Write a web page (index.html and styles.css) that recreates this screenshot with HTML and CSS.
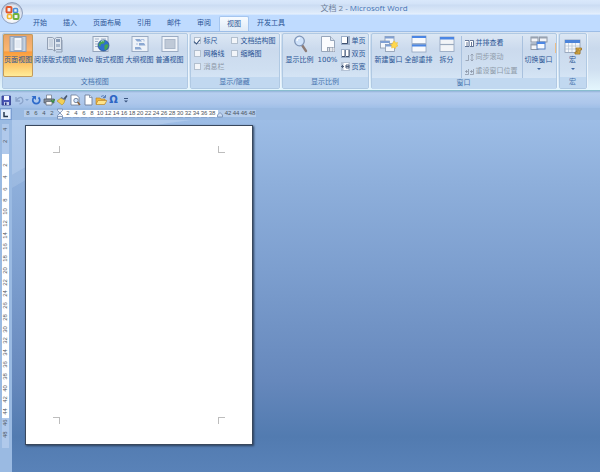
FILE: index.html
```html
<!DOCTYPE html>
<html lang="zh-CN">
<head>
<meta charset="utf-8">
<title>文档 2 - Microsoft Word</title>
<link rel="stylesheet" href="styles.css">
</head>
<body>
<header class="titlebar">
  <h1><span class="doc-name">文档 2</span> - Microsoft Word</h1>
  <button class="orb" aria-label="Office">
    <svg viewBox="0 0 24 24">
      <defs><radialGradient id="og" cx=".5" cy=".75" r=".8"><stop offset="0" stop-color="#fff"/><stop offset=".6" stop-color="#dde3ee"/><stop offset="1" stop-color="#a3aec4"/></radialGradient></defs>
      <circle cx="12" cy="12" r="10.5" fill="url(#og)" stroke="#7f8fae" stroke-width=".8"/>
      <path d="M3.5 10a8.8 8.8 0 0 1 17 0z" fill="#fff" opacity=".45"/>
      <g fill="none" stroke-width="2">
        <rect x="6.500" y="6" width="5" height="5.500" rx="1" stroke="#e0562b"/>
        <rect x="13.500" y="7.500" width="4" height="4" rx="1" stroke="#4a8fdb" stroke-width="1.600"/>
        <rect x="7.500" y="13.500" width="4" height="4" rx="1" stroke="#f3b52a" stroke-width="1.600"/>
        <rect x="13.500" y="13" width="5" height="5" rx="1" stroke="#6fb13c"/>
      </g>
    </svg>
  </button>
</header>

<nav class="tabs">
  <button>开始</button><button>插入</button><button>页面布局</button><button>引用</button><button>邮件</button><button>审阅</button><button class="active">视图</button><button>开发工具</button>
</nav>

<div class="ribbon">
  <section class="group">
    <div class="tools views">
      <button class="big active"><svg viewBox="0 0 18 18"><rect x="1" y="1.500" width="16" height="15" fill="#c6d3e3" stroke="#8d9cb4"/><path d="M3 3h12v12H3z" fill="#b9c8da"/><rect x="5" y="2.500" width="8" height="13" fill="#f5f8fc" stroke="#9aa9bf"/><path d="M6.500 5h5v8h-5z" fill="#e3eaf3"/></svg><span>页面视图</span></button>
      <button class="big"><svg viewBox="0 0 18 18"><path d="M1.500 2.500h5l2 1.500 2-1.500h5v12h-5l-2 1.500-2-1.500h-5z" fill="#dde5ef" stroke="#93a1b5"/><path d="M8.500 4v12" stroke="#8796ac"/><path d="M3 5h4M3 7h4M3 9h4M3 11h4" stroke="#b2bfd0"/><path d="M10 4h4v3h-4z" fill="#879bb8"/><path d="M10 9h4v3h-4z" fill="#a9b8cc"/><path d="M16 5v12h-6" fill="none" stroke="#8f9db1"/></svg><span>阅读版式视图</span></button>
      <button class="big"><svg viewBox="0 0 18 18"><rect x="1" y="1.500" width="15" height="15" fill="#edf2f8" stroke="#94a4ba"/><path d="M3 4h4M3 6.500h3M3 9h3M3 11.500h3M9 4h5" stroke="#a2b3ca"/><circle cx="11.500" cy="10.500" r="5.500" fill="#2f6fcd" stroke="#275085" stroke-width=".7"/><path d="M8 7q2.500-3 5-1l-1 2.500-3 .5-1 3-1.500-2zM12.500 10l3-1 1 2-2 3.500-2 .5z" fill="#47a551"/><path d="M9 6.500q2-1.500 3-.5" fill="none" stroke="#c5e5ff" stroke-width=".8"/></svg><span>Web 版式视图</span></button>
      <button class="big"><svg viewBox="0 0 18 18"><rect x="1" y="1.500" width="16" height="15" fill="#edf2f9" stroke="#9aabc3"/><path d="M4 4h5l2 2.500H6zM8 8h5l1.500 2.500H8zM4 12h5l2 2.500H4z" fill="#8ba8d2"/><path d="M10 4.500h3v2M5 9h2" stroke="#aabfdf" fill="none"/></svg><span>大纲视图</span></button>
      <button class="big"><svg viewBox="0 0 18 18"><rect x="1" y="1.500" width="16" height="15" fill="#f0f4fa" stroke="#9aabc3"/><rect x="4" y="4.500" width="10" height="9" fill="#bfc9d7" stroke="#aab7c9"/></svg><span>普通视图</span></button>
    </div>
    <h2>文档视图</h2>
  </section>

  <section class="group">
    <div class="tools checks">
      <label><input type="checkbox" checked>标尺</label>
      <label><input type="checkbox">文档结构图</label>
      <label><input type="checkbox">网格线</label>
      <label><input type="checkbox">缩略图</label>
      <label class="off"><input type="checkbox" disabled>消息栏</label>
    </div>
    <h2>显示/隐藏</h2>
  </section>

  <section class="group">
    <div class="tools zoom">
      <button class="big"><svg viewBox="0 0 18 18"><path d="M11 10l4 6" stroke="#8d7c77" stroke-width="2.400" stroke-linecap="round"/><circle cx="8.500" cy="6" r="4.800" fill="#cfe2fa" stroke="#8096b8" stroke-width="1.300"/><path d="M6 6q0-3 3-3" fill="none" stroke="#fff" stroke-width="1.200"/></svg><span>显示比例</span></button>
      <button class="big"><svg viewBox="0 0 18 18"><path d="M2.500 1.500h9l4 4v11h-13z" fill="#fbfcfe" stroke="#97a6bb"/><path d="M11.500 1.500v4h4" fill="#d5dfed" stroke="#97a6bb"/><path d="M8 12h8v5H8z" fill="#9aa5b5"/><path d="M9.500 13v3M11.500 13h1v3h-1zM14 13h1v3h-1z" fill="none" stroke="#fff" stroke-width=".7"/></svg><span>100%</span></button>
      <div class="list">
        <button><svg viewBox="0 0 9 9"><path d="M0 0h9v9H0z" fill="#9cafc9"/><path d="M1 1h5v6H1z" fill="#fff"/><path d="M6.500 1v6.500H1" fill="none" stroke="#40516f"/></svg>单页</button>
        <button><svg viewBox="0 0 9 9"><path d="M0 0h9v9H0z" fill="#9cafc9"/><path d="M1 1h3v6H1zM5 1h3v6H5z" fill="#fff"/><path d="M4 1v6.500H1M8 1v6.500H5" fill="none" stroke="#40516f"/></svg>双页</button>
        <button><svg viewBox="0 0 9 9"><path d="M0 0h9v9H0z" fill="#b4c2d5"/><path d="M2.500 1h5v7h-5z" fill="#fff"/><path d="M0 4.500h3M1.500 3v3M5 3h3v3H5zM5 4.500h3" fill="none" stroke="#50617e"/></svg>页宽</button>
      </div>
    </div>
    <h2>显示比例</h2>
  </section>

  <section class="group accent">
    <div class="tools window">
      <button class="big"><svg viewBox="0 0 18 18"><g fill="#f4f7fb" stroke="#8b9ab0" stroke-width=".8"><rect x="5" y="1.500" width="9" height="7"/><rect x=".5" y="6" width="9" height="7"/><rect x="5.500" y="9.500" width="9" height="7"/></g><path d="M5 1.500h9v2H5zM.5 6h9v2h-9zM5.500 9.500h9v2h-9z" fill="#7f9fd3"/><path d="M14.500 6l1 2 2-.5-.5 2 1 1.500-2 .5-.5 2-2-1-2 .5.500-2-1.500-1.500 2-.5.500-2z" fill="#ffd84e" stroke="#edb92c" stroke-width=".5"/></svg><span>新建窗口</span></button>
      <button class="big"><svg viewBox="0 0 18 18"><g fill="#f7f9fd" stroke="#8fa2bd" stroke-width=".8"><rect x="2" y="1" width="14" height="7.500"/><rect x="2" y="9.500" width="14" height="7.500"/></g><path d="M2 1h14v2H2zM2 9.500h14v2H2z" fill="#4b86e4"/></svg><span>全部重排</span></button>
      <button class="big split"><svg viewBox="0 0 18 18"><rect x="2" y="2" width="14" height="14.500" fill="#f2f4f7" stroke="#8fa2bd" stroke-width=".8"/><path d="M2 2h14v2.500H2z" fill="#4b86e4"/><path d="M2 9.500h14" stroke="#9aa9bd" stroke-width="1.200"/></svg><span>拆分</span></button>
      <div class="list roomy">
        <button><svg viewBox="0 0 9 9"><path d="M0 1h4v6H0zM5 1h3v6H5z" fill="#fff"/><path d="M0 1.500h4V7.500H0M5 1.500h3.500v6H5M2 3v4M6.500 3v4" fill="none" stroke="#42577d" stroke-width=".8"/></svg>并排查看</button>
        <button class="off" disabled><svg viewBox="0 0 9 9"><path d="M.5 7.500h3V2M7 1v7M5.500 2.500L7 1l1.500 1.500M5.500 6.500L7 8l1.500-1.500" fill="none" stroke="#8d98a8" stroke-width=".8"/></svg>同步滚动</button>
        <button class="off" disabled><svg viewBox="0 0 9 9"><path d="M0 7.500h3.500V2M5 7.500h3.500V2M0 4.500h3M5 4.500h3M1.500 3v3M6.500 3v3" fill="none" stroke="#8d98a8" stroke-width=".8"/></svg>重设窗口位置</button>
      </div>
      <button class="big"><svg viewBox="0 0 18 18"><g fill="#f2f4f8" stroke="#858f9e" stroke-width=".9"><rect x="1" y="2" width="7" height="5"/><rect x="9.500" y="2" width="7.500" height="5"/><rect x="1" y="9" width="7" height="5.500"/></g><path d="M1 2h7v1.500H1zM9.500 2H17v1.500H9.500zM1 9h7v1.500H1z" fill="#98a2b1"/><rect x="7" y="7" width="8" height="7" fill="#f5f9ff" stroke="#547ebf"/><path d="M7 7h8v2H7z" fill="#4b86e4"/></svg><span>切换窗口</span><i class="caret"></i></button>
    </div>
    <h2>窗口</h2>
  </section>

  <section class="group">
    <div class="tools">
      <button class="big macro"><svg viewBox="0 0 18 18"><rect x="1" y="3" width="15" height="12.500" fill="#f5f7fb" stroke="#8c9bb2" stroke-width=".8"/><path d="M1 3h15v3H1z" fill="#4b83da"/><path d="M4.500 6v9M8 6v9M11.500 6v9M1 9h15M1 12h15" stroke="#b3c0d3" stroke-width=".7"/><path d="M12 11h5.500v2H16v4h-5v-2h1.500z" fill="#ddb14b" stroke="#9a7020" stroke-width=".8"/><path d="M13 13h2M12.500 15h2" stroke="#79591e" stroke-width=".7"/></svg><span>宏</span><i class="caret"></i></button>
    </div>
    <h2>宏</h2>
  </section>
</div>

<div class="quick">
  <button aria-label="保存"><svg viewBox="0 0 12 12"><path d="M2 2h8.500v9H2z" fill="#4856b5" stroke="#303d8d" stroke-width=".8"/><path d="M4 2h5v4H4z" fill="#f3f6ff"/><path d="M4 8h5v3H4z" fill="#c7cfed"/><path d="M5 8.500h1.500V11H5z" fill="#28347d"/></svg></button>
  <button aria-label="撤消" class="undo"><svg viewBox="0 0 12 12"><path d="M3 3v4h4M3 6.500Q8 1 9.500 5T6.500 10" fill="none" stroke="#8aa3ca" stroke-width="1.300"/></svg><i class="caret"></i></button>
  <button aria-label="重复"><svg viewBox="0 0 12 12"><path d="M4 3.500A3.500 3.500 0 1 0 8.500 3.500" fill="none" stroke="#2f6bca" stroke-width="1.700"/><path d="M1.500 2h4.500v4z" fill="#2f6bca"/></svg></button>
  <button aria-label="打印"><svg viewBox="0 0 12 12"><path d="M3.500 1h5v4h-5z" fill="#fff" stroke="#6d7584" stroke-width=".7"/><path d="M1 5h10v4H1z" fill="#858d99" stroke="#4b535f" stroke-width=".7"/><path d="M3 7.500h6V11H3z" fill="#f5f5f5" stroke="#5b626d" stroke-width=".7"/><path d="M8 6l2 2 2-3" fill="none" stroke="#34953d" stroke-width="1.200"/></svg></button>
  <button aria-label="格式刷"><svg viewBox="0 0 12 12"><path d="M7 5l3.500-4 1 1L9 6z" fill="#44536b"/><path d="M1 7l4-3 4 2-1 3-2 2z" fill="#f2cf55" stroke="#b08b27" stroke-width=".6"/><path d="M5 3.500l4.500 2.500" stroke="#6e7c94" stroke-width="1.200"/></svg></button>
  <button aria-label="打印预览"><svg viewBox="0 0 12 12"><path d="M2 1h5.500L10 3.500V11H2z" fill="#fff" stroke="#6b7992" stroke-width=".8"/><circle cx="7" cy="6.500" r="2.200" fill="#d2e6ff" stroke="#5e708d" stroke-width=".8"/><path d="M8.500 8l2.500 3" stroke="#886038" stroke-width="1.400"/></svg></button>
  <button aria-label="新建"><svg viewBox="0 0 12 12"><path d="M3 1h4.500L10 3.500V11H3z" fill="#fff" stroke="#6e7d98" stroke-width=".9"/><path d="M7.500 1v2.500H10" fill="#d4deed" stroke="#6e7d98" stroke-width=".7"/></svg></button>
  <button aria-label="打开"><svg viewBox="0 0 12 12"><path d="M1 4h4l1 1h4v5H1z" fill="#efb53e" stroke="#b57d20" stroke-width=".6"/><path d="M3 6.500h9L9.500 10.500H1z" fill="#ffe38a" stroke="#b57d20" stroke-width=".6"/><path d="M6 2.500q2.500-2 4 .5M10.500 1v2.500H8" fill="none" stroke="#446bac" stroke-width=".8"/></svg></button>
  <button aria-label="符号" class="omega">Ω</button>
  <button aria-label="自定义快速访问工具栏"><svg viewBox="0 0 12 12"><path d="M4 4.500h4" stroke="#39547e"/><path d="M4 6.500h4L6 8.500z" fill="#39547e"/></svg></button>
</div>

<div class="hruler-row">
  <button class="tabstop" aria-label="制表符"><svg viewBox="0 0 9 9"><path d="M3 2v4.500h4" fill="none" stroke="#26384f" stroke-width="1.500"/></svg></button>
  <div class="hruler">
    <span>8</span><span>6</span><span>4</span><span>2</span>
    <span class="mark"><svg viewBox="0 0 8 12"><path d="M1.500 1h5v1.500L4 5 1.500 2.500zM4 5l2.500 2.500V11h-5V7.500zM1.500 8.500h5" fill="#e8effa" stroke="#7088ad" stroke-width=".8"/></svg></span>
    <span class="w">2</span><span class="w">4</span><span class="w">6</span><span class="w">8</span><span class="w">10</span><span class="w">12</span><span class="w">14</span><span class="w">16</span><span class="w">18</span><span class="w">20</span><span class="w">22</span><span class="w">24</span><span class="w">26</span><span class="w">28</span><span class="w">30</span><span class="w">32</span><span class="w">34</span><span class="w">36</span><span class="w">38</span>
    <span class="mark end"><svg viewBox="0 0 8 12"><path d="M1.500 9V7L4 4.500 6.500 7v2z" fill="#cbdcf3" stroke="#7088ad" stroke-width=".8"/></svg></span>
    <span>42</span><span>44</span><span>46</span><span>48</span>
  </div>
</div>

<main class="workspace">
  <div class="gutter">
    <div class="vruler">
      <div class="out"><span>4</span><span>2</span></div>
      <div class="in"><span>2</span><span>4</span><span>6</span><span>8</span><span>10</span><span>12</span><span>14</span><span>16</span><span>18</span><span>20</span><span>22</span><span>24</span><span>26</span><span>28</span><span>30</span><span>32</span><span>34</span><span>36</span><span>38</span><span>40</span><span>42</span><span>44</span></div>
      <div class="out"><span>46</span><span>48</span></div>
    </div>
  </div>
  <div class="canvas">
    <svg class="swirl" viewBox="0 0 200 72" preserveAspectRatio="none"><path d="M0 0h180Q70 12 0 55z" fill="#c3d8f1" opacity=".5"/><path d="M0 55Q60 20 150 5V20Q60 30 0 68z" fill="#c3d8f1" opacity=".25"/></svg>
    <article class="page">
      <div class="corners"><i class="r b"></i><i class="l b"></i></div>
      <div class="corners"><i class="r t"></i><i class="l t"></i></div>
    </article>
  </div>
</main>
</body>
</html>
```
FILE: styles.css
```css
* { box-sizing: border-box; }

body {
  margin: 0;
  min-height: 100vh;
  display: flex;
  flex-direction: column;
  font: 7px/10px "DejaVu Sans", "Noto Sans CJK SC", sans-serif;
  color: #2b5595;
  background: #9abae2;
}

button {
  margin: 0;
  padding: 0;
  border: 0;
  background: none;
  font: inherit;
  color: inherit;
  white-space: nowrap;
}

svg { display: block; flex: none; }
h1, h2 { margin: 0; font-weight: normal; }

/* title */
.titlebar {
  position: relative;
  height: 15px;
  padding-left: 128px;
  background: linear-gradient(#d9e8fb 0, #d3e3f8 4px, #cbdcf3 5px, #dfebfa 13px, #e6f1fe 14px, #c5deff 15px);
}
.titlebar h1 {
  font: 8px/16px "Open Sans", "Noto Sans CJK SC", sans-serif;
  text-align: center;
  color: #4574b5;
}
.doc-name { color: #6d7f99; }
.orb { position: absolute; left: 0; top: 1px; z-index: 2; }
.orb svg { width: 24px; height: 24px; }

/* tabs */
.tabs {
  display: flex;
  height: 16px;
  padding: 1px 0 0 25px;
  background: #bfdbff;
}
.tabs button { padding: 0 8px; line-height: 15px; }
.tabs .active {
  padding: 0 7px;
  border: 1px solid #a5c5ee;
  border-bottom: 0;
  border-radius: 2px 2px 0 0;
  background: linear-gradient(#f7fbff, #dfeaf7);
  line-height: 13px;
}

/* ribbon */
.ribbon {
  display: flex;
  gap: 2px;
  height: 60px;
  padding: 1px 2px;
  border-top: 1px solid #9dbde6;
  border-bottom: 1px solid #88bdce;
  background: linear-gradient(#d8e4f2, #c9d9ec 28%, #d0e0f1 65%, #e4f6fd);
}
.group {
  position: relative;
  display: flex;
  flex-direction: column;
  border: 1px solid #b0c9e3;
  border-radius: 2px;
  box-shadow: 1px 0 0 #edf5fc;
  background: linear-gradient(#dce7f4, #cbdaed 28%, #cfdff1 65%, #dcebf9);
}
.group h2 {
  height: 11px;
  font-size: 7px;
  line-height: 11px;
  text-align: center;
  color: #4673ae;
  background: #c1d8f0;
}
.tools { display: flex; flex: 1; }
.accent::after {
  content: "";
  position: absolute;
  right: 0;
  top: 9px;
  width: 1px;
  height: 10px;
  background: #edbd87;
}

.big {
  display: flex;
  flex-direction: column;
  align-items: center;
  padding: 1px 1px 0;
}
.big svg { width: 18px; height: 18px; }
.big span { margin-top: 2px; }
.big.active {
  border-radius: 2px;
  box-shadow: inset 0 0 0 1px #c29a5c;
  background: linear-gradient(#e9a266, #fbb772 38%, #fb9b3c 42%, #fdc567 70%, #ffef9d);
}
.caret {
  margin-top: 3px;
  border: 2px solid transparent;
  border-top-color: #3e68a5;
  border-bottom: 0;
}
.views { padding-right: 2px; }

.checks {
  display: grid;
  grid-template-columns: 37px 48px;
  grid-auto-rows: 13px;
  padding: 0 0 0 3px;
}
.checks label { display: flex; align-items: center; gap: 3px; white-space: nowrap; }
.checks input {
  appearance: none;
  flex: none;
  display: grid;
  justify-content: center;
  width: 7px;
  height: 7px;
  margin: 0;
  border: 1px solid #b2bfce;
  background: #f2f5f9;
}
.checks input:checked::after {
  content: "";
  width: 3px;
  height: 5px;
  border: solid #34527f;
  border-width: 0 1px 1px 0;
  rotate: 40deg;
}
.off, .off:disabled { color: #8e9aa9; }

.list { display: grid; grid-auto-rows: 13px; align-content: start; }
.list button { display: flex; align-items: center; gap: 2px; }
.list svg { width: 9px; height: 9px; }
.zoom { padding: 0 2px; gap: 2px; }
.window { padding: 0 2px; }
.roomy {
  grid-auto-rows: 14px;
  margin: 2px 1px 0;
  padding: 0 4px 0 3px;
  border: solid #a9c1de;
  border-width: 0 1px;
  align-self: flex-start;
}
.split { padding: 1px 4px 0; }
.macro { width: 26px; padding-top: 3px; }
.macro span { margin-top: 0; }

/* quick access bar */
.quick {
  display: flex;
  align-items: center;
  gap: 1px;
  height: 17px;
  background: linear-gradient(#93b2d8 0, #b7cfef 2px, #adc7eb 12px, #a0bfe7);
}
.quick svg { width: 12px; height: 12px; }
.undo { display: flex; align-items: center; width: 16px; }
.undo .caret { margin: 0; opacity: .4; }
.omega { width: 11px; font-size: 10px; font-weight: bold; color: #2e66c4; }

/* rulers */
.hruler-row {
  display: flex;
  height: 12px;
  background: #9abae2;
}
.tabstop {
  width: 12px;
  margin-right: 12px;
  border: 1px solid #7c9fd2;
  background: #b8cff0;
}
.tabstop svg { width: 9px; height: 9px; background: #e5eefb; }
.hruler, .vruler { font: 6px/7px "Liberation Sans", sans-serif; color: #4b5561; }
.hruler { display: flex; padding-top: 2px; }
.hruler span {
  width: 8px;
  height: 7px;
  text-align: center;
  background: #b5cdec;
}
.hruler .w { background: #fff; box-shadow: 0 2px 0 -1px #8aa6ce; }
.hruler .mark { background: linear-gradient(90deg, #b5cdec 50%, #fff 50%); }
.hruler .end { background: linear-gradient(90deg, #fff 25%, #b5cdec 25%); }
.mark svg { width: 8px; height: 12px; margin-top: -2px; }

.workspace { display: flex; flex: 1; }
.gutter { width: 12px; padding: 4px 3px 0 2px; background: #9abae2; }
.vruler div { display: flex; flex-direction: column; }
.vruler span {
  writing-mode: vertical-rl;
  rotate: 180deg;
  text-align: center;
  line-height: 7px;
}
.vruler .out {
  gap: 2px;
  height: 30px;
  background: #b0c9eb;
}
.vruler .out span { height: 10px; }
.vruler .in {
  height: 264px;
  padding-top: 5px;
  background: #fff;
}
.vruler .in span { flex: 1; min-height: 0; }

/* document area */
.canvas {
  position: relative;
  flex: 1;
  padding: 5px 0 27px 13px;
  background: linear-gradient(#9dbde6, #8eafdb 18%, #7d9fcf 42%, #6688bc 74%, #527bb0 90%, #5982b8);
}
.swirl { position: absolute; left: 0; top: 0; width: 200px; height: 72px; }
.page {
  position: relative;
  display: flex;
  flex-direction: column;
  justify-content: space-between;
  width: 228px;
  aspect-ratio: 228 / 320;
  padding: 20px 27px;
  border: 1px solid #39485d;
  background: #fff;
  box-shadow: 1px 1px 2px #2b3f5c;
}
.corners { display: flex; justify-content: space-between; }
.corners i { width: 7px; height: 7px; border: 0 solid #bdbdbd; }
.corners .r { border-right-width: 1px; }
.corners .l { border-left-width: 1px; }
.corners .t { border-top-width: 1px; }
.corners .b { border-bottom-width: 1px; }
```
